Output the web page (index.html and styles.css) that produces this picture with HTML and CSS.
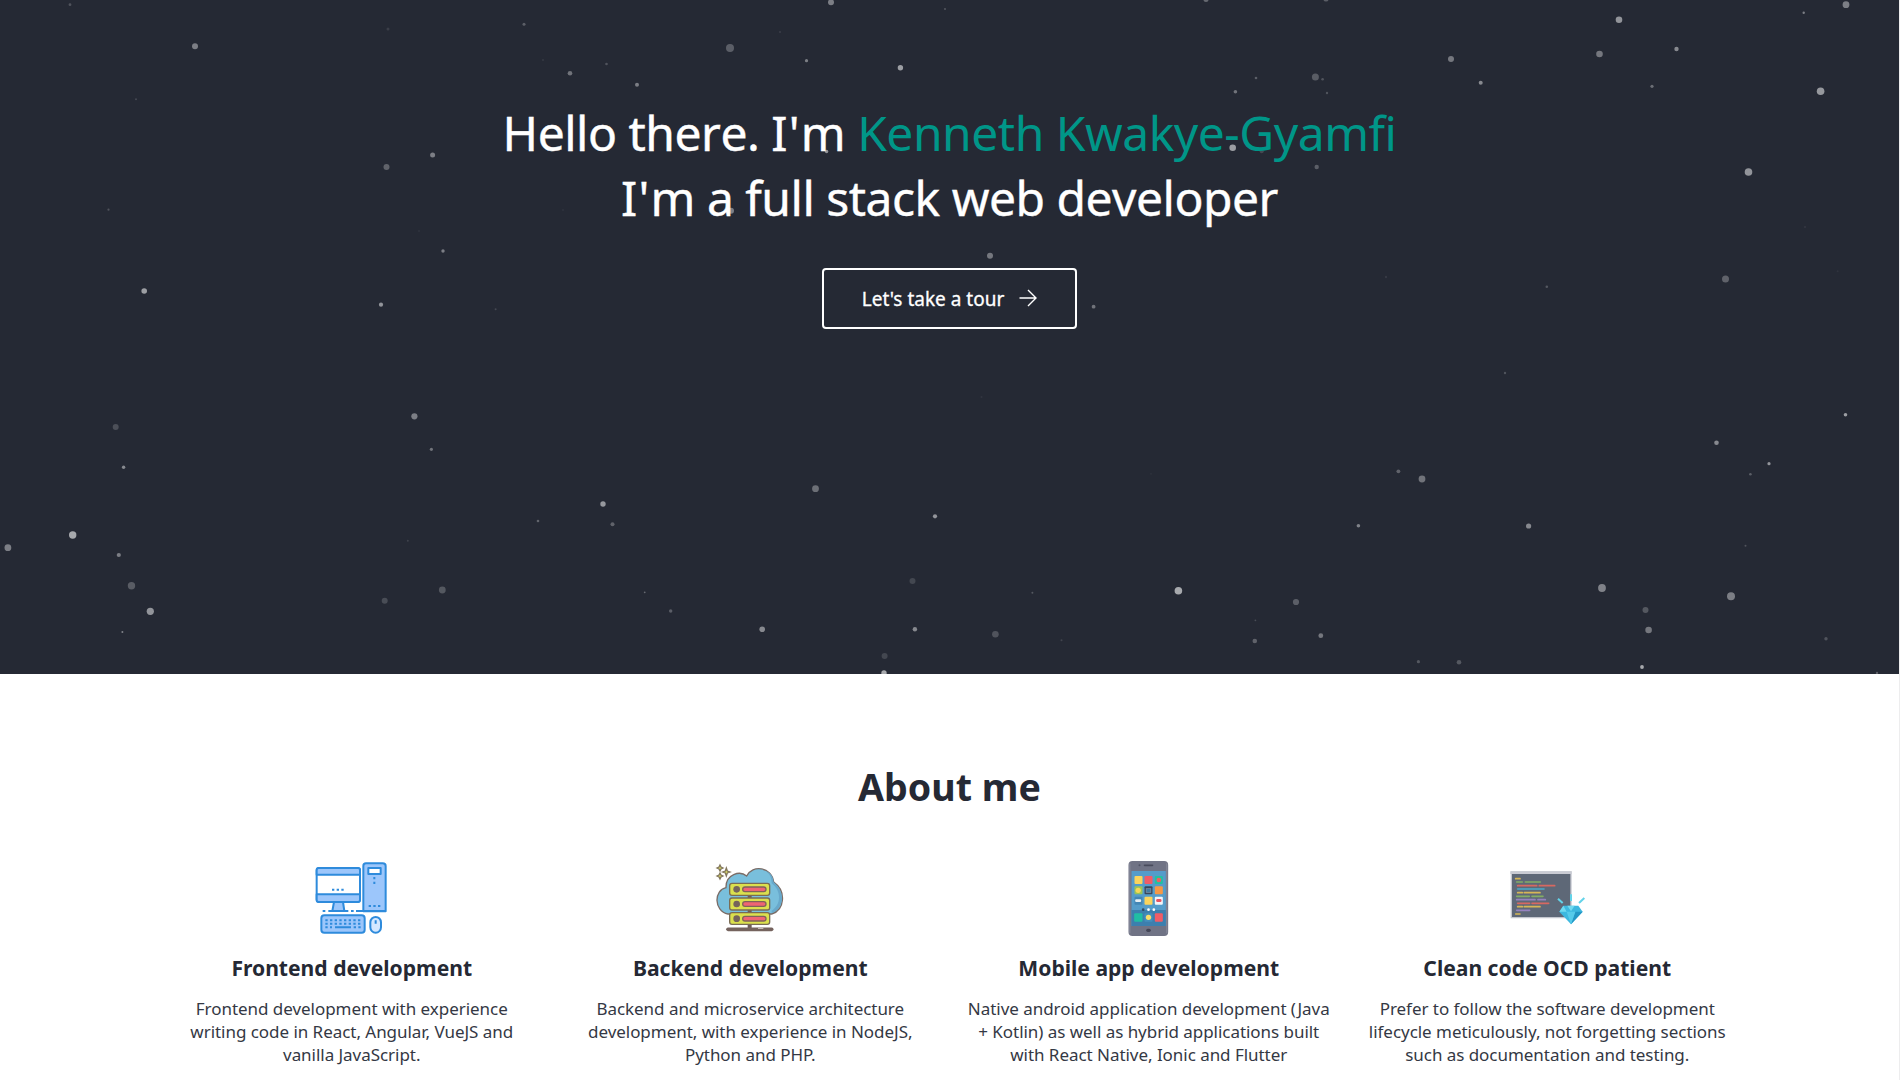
FILE: index.html
```html
<!DOCTYPE html>
<html lang="en">
<head>
<meta charset="utf-8">
<title>Kenneth Kwakye-Gyamfi</title>
<link rel="stylesheet" href="styles.css">
</head>
<body>
<header class="hero">
  <svg class="stars" id="stars" aria-hidden="true"></svg>
  <h1 class="headline">Hello there. I<span class="mark">'</span>m <span class="name">Kenneth Kwakye-Gyamfi</span><br>I<span class="mark">'</span>m a full stack web developer</h1>
  <a class="tour" href="#about">Let's take a tour
    <svg class="arrow" viewBox="0 0 18 18"><path d="M.5 9H17M9 1l8 8-8 8"/></svg>
  </a>
</header>
<main class="about" id="about">
  <h2 class="about-title">About me</h2>
  <div class="skills">
    <article class="skill">
      <svg class="icon" viewBox="36 24 240 240">
        <g fill="#fff" stroke="#2e8bdc" stroke-width="6" stroke-linejoin="round">
          <rect x="50" y="54" width="130" height="102" rx="8"/>
          <path fill="#9cc6fb" d="M50 74V60q0-6 6-6h118q6 0 6 6v14zM50 133h130v17q0 6-6 6H56q-6 0-6-6zM102 156h27l4 27H97z"/>
          <path fill="#9cc6fb" d="M190 184V48q0-8 8-8h50q9 0 9 8v136z"/>
          <rect x="205" y="54" width="37" height="18"/>
          <rect fill="#9cc6fb" x="64" y="196" width="130" height="52" rx="9"/>
          <rect fill="#d5e8ff" x="211" y="201" width="32" height="47" rx="16"/>
        </g>
        <g fill="none" stroke="#2e8bdc" stroke-width="6">
          <path d="M85 183h60M168 183h90M105 232h48M227 211v10"/>
          <path stroke-dasharray="7 7" d="M96 119h38M206 168h37M223 81v24M76 211h108M76 221h108M76 232h20M161 232h24"/>
          <path d="M68 183h8M153 183h8"/>
        </g>
      </svg>
      <h3 class="skill-title">Frontend development</h3>
      <p class="skill-text">Frontend development with experience<br>writing code in React, Angular, VueJS and<br>vanilla JavaScript.</p>
    </article>
    <article class="skill">
      <svg class="icon" viewBox="30 24 240 240">
        <path d="M84 192C40 182 42 120 78 113C77 72 120 61 140 78C157 43 215 50 221 96C260 123 254 180 215 192z" fill="#79bfdc" stroke="#7a6d68" stroke-width="4"/>
        <path d="M195 62c15 8 20 22 20 38 30 22 29 65 0 82v8c40-16 41-65 6-94-2-20-11-30-26-34z" fill="#68a9cb"/>
        <path d="M149 136v102" stroke="#6f5d58" stroke-width="12"/>
        <g fill="#dbe04d" stroke="#796c55" stroke-width="4">
          <rect x="89" y="100" width="120" height="36" rx="7"/>
          <rect x="89" y="144" width="120" height="36" rx="7"/>
          <rect x="89" y="188" width="120" height="35" rx="7"/>
        </g>
        <g fill="#ef6473" stroke="#806259" stroke-width="4">
          <rect x="128" y="111" width="70" height="14" rx="7"/>
          <rect x="128" y="155" width="70" height="14" rx="7"/>
          <rect x="128" y="199" width="70" height="14" rx="7"/>
        </g>
        <g fill="#76645b"><circle cx="110" cy="118" r="10"/><circle cx="110" cy="162" r="10"/><circle cx="110" cy="206" r="10"/></g>
        <path d="M84 238h131" stroke="#75635e" stroke-width="11" stroke-linecap="round"/>
        <path d="M174 235h16" stroke="#c5bbb5" stroke-width="4"/>
        <g fill="#dadc63" stroke="#82765e" stroke-width="4">
          <path d="m60 45 3 6 6 3-6 3-3 6-3-6-6-3 6-3zM79 54l3 9 8 3-8 3-3 9-3-9-8-3 8-3zM60 69l3 6 6 3-6 3-3 6-3-6-6-3 6-3z"/>
        </g>
      </svg>
      <h3 class="skill-title">Backend development</h3>
      <p class="skill-text">Backend and microservice architecture<br>development, with experience in NodeJS,<br>Python and PHP.</p>
    </article>
    <article class="skill">
      <svg class="icon" viewBox="25.5 24 240 240">
        <rect x="84" y="33" width="119" height="225" rx="12" fill="#707385"/>
        <path d="M88 40v210M199 40v210" stroke="#888b9b" stroke-width="3"/>
        <path fill="#549cca" d="M93 63h103v165H93z"/><path fill="#3c7fae" d="M93 180h103v48H93z"/>
        <path d="M132 46h24" stroke="#484b5c" stroke-width="5" stroke-linecap="round"/><circle cx="117" cy="46" r="3" fill="#505365"/>
        <rect x="137" y="236" width="14" height="10" rx="5" fill="#444657"/>
        <g>
          <rect x="102" y="78" width="24" height="24" rx="3" fill="#fbd45d"/>
          <rect x="132" y="78" width="24" height="24" rx="3" fill="#f15c66"/>
          <rect x="163" y="78" width="24" height="24" rx="3" fill="#22c1a0"/>
          <rect x="102" y="109" width="24" height="24" rx="3" fill="#9ac457"/>
          <rect x="132" y="109" width="24" height="24" rx="3" fill="#38465b"/>
          <rect x="163" y="109" width="24" height="24" rx="3" fill="#f79845"/>
          <rect x="102" y="140" width="24" height="24" rx="3" fill="#4386b5"/>
          <rect x="132" y="140" width="24" height="24" rx="3" fill="#fbd45d"/>
          <rect x="163" y="140" width="24" height="24" rx="3" fill="#f4f5f8"/>
          <rect x="101" y="190" width="25" height="25" rx="3" fill="#20bea3"/>
          <rect x="132" y="190" width="24" height="25" rx="3" fill="#438fbd"/>
          <rect x="163" y="190" width="24" height="25" rx="3" fill="#f15c66"/>
        </g>
        <circle cx="175" cy="90" r="7" fill="#ec6065"/><circle cx="113" cy="121" r="8" fill="#f6d858"/>
        <rect x="137" y="116" width="14" height="11" fill="#417ba2" stroke="#8296aa" stroke-width="2"/>
        <rect x="104" y="148" width="18" height="8" rx="3" fill="#e6eff4"/><rect x="167" y="147" width="16" height="9" rx="4" fill="#ea5461"/>
        <circle cx="144" cy="202" r="8" fill="#fadd69"/>
        <g fill="#fff"><circle cx="128" cy="179" r="4" fill="#314b65"/><circle cx="144" cy="179" r="4"/><circle cx="160" cy="179" r="4"/></g>
      </svg>
      <h3 class="skill-title">Mobile app development</h3>
      <p class="skill-text">Native android application development (Java<br>+ Kotlin) as well as hybrid applications built<br>with React Native, Ionic and Flutter</p>
    </article>
    <article class="skill">
      <svg class="icon" viewBox="21 24 240 240">
        <path d="M34 66h179v137H34z" fill="#5e6877" stroke="#c4c7cf" stroke-width="4"/>
        <path d="M31 68h184" stroke="#c9cbd3" stroke-width="8"/>
        <g fill="none" stroke-width="5" stroke-linecap="round">
          <path stroke="#d6b656" d="M47 86h13M53 128h14M73 128h47M53 170h14M73 170h47M47 192h13"/>
          <path stroke="#83ad65" d="M50 96h17M76 96h45M50 139h38M96 139h33"/>
          <path stroke="#d76861" d="M53 107h57M118 107h46M53 160h36M96 160h50"/>
          <path stroke="#4ba9c9" d="M53 117h79"/>
          <path stroke="#9682bf" d="M50 149h55M114 149h22M50 181h39"/>
        </g>
        <path d="m174 146 14 13M213 133v20M237 159l16-15" stroke="#63d3e9" stroke-width="6"/>
        <path fill="#3db8df" d="m190 167h45l13 18-35 38-35-38z"/>
        <path fill="#70daf0" d="m190 167-12 18h22zM202 167h22l-11 17z"/>
        <path fill="#2497c5" d="m226 185h22l-35 38z"/><path fill="#56cbea" d="M200 185h26l-13 38z"/>
      </svg>
      <h3 class="skill-title">Clean code OCD patient</h3>
      <p class="skill-text">Prefer to follow the software development<br>lifecycle meticulously, not forgetting sections<br>such as documentation and testing.</p>
    </article>
  </div>
</main>
<script src="stars.js"></script>
</body>
</html>
```

FILE: styles.css
```css
* { box-sizing: border-box; }
html { background: #ededee; overflow: hidden; }
body {
  width: 1899px;
  height: 1080px;
  margin: 0;
  overflow: hidden;
  background: #fff;
  color: #252934;
  font-family: "Noto Sans", sans-serif;
}
h1, h2, h3, p { margin: 0; }
.hero {
  position: relative;
  display: flex;
  flex-direction: column;
  align-items: center;
  height: 674px;
  padding-top: 100px;
  background: #252934;
  color: #fff;
}
.stars {
  position: absolute;
  inset: 0;
  width: 100%;
  height: 100%;
  fill: #fff;
}
.headline {
  position: relative;
  font-size: 48px;
  font-weight: 400;
  line-height: 65px;
  letter-spacing: -.5px;
  text-align: center;
  font-kerning: none;
  -webkit-text-stroke: .4px #fff;
}
.mark { margin: 0 1.7px; }
.name { color: #009688; font-kerning: normal; -webkit-text-stroke: 0; }
.tour {
  position: relative;
  display: flex;
  align-items: center;
  justify-content: center;
  gap: 15px;
  width: 255px;
  height: 61px;
  margin-top: 38px;
  padding-top: 1px;
  border: 2px solid #fff;
  border-radius: 4px;
  color: #fff;
  font-size: 19px;
  font-weight: 400;
  text-decoration: none;
  -webkit-text-stroke: .3px #fff;
}
.arrow {
  width: 18px;
  height: 18px;
  margin-top: -3px;
  fill: none;
  stroke: #fff;
  stroke-width: 1.4;
}
.about { padding-top: 87px; text-align: center; }
.about-title {
  font-size: 37.6px;
  font-weight: 700;
  line-height: 52px;
}
.skills {
  display: grid;
  grid-template-columns: repeat(4, 1fr);
  width: 1594px;
  margin: 45px auto 0;
}
.skill { display: flex; flex-direction: column; align-items: center; }
.icon { width: 80px; height: 80px; }
.skill-title {
  margin-top: 16px;
  font-size: 21.1px;
  font-weight: 700;
  line-height: 28px;
}
.skill-text {
  margin-top: 15px;
  color: #343844;
  font-size: 17px;
  line-height: 23px;
  letter-spacing: -.04px;
  white-space: nowrap;
}
```

FILE: stars.js
```js
// Each star: x, y, radius, opacity
const stars = [
  [70,4.7,1.4,.2],[195,46.3,3,.4],[388,29,1.5,.1],[524,24.3,1.5,.25],[831,2.3,3,.4],[945,9,1.1,.2],
  [780,32,1,.1],[730,48,4,.25],[806.5,60.7,1.6,.4],[900.4,67.7,2.7,.55],[543,60,1,.08],[606.5,64,1.3,.2],
  [570,73.3,2.3,.35],[637,84.7,2,.4],[136,99.3,1,.15],[432.6,155,2.5,.4],[386.5,167,3,.27],[108.5,209.7,1.1,.2],
  [563,210,1,.05],[419,231,1,.05],[443,251,1.7,.4],[144.2,291,2.8,.55],[381,304.7,2.1,.5],[495.6,309.3,1,.15],
  [826.6,151.5,1.7,.5],[731,210.7,3,.4],[1232.7,147.7,3.3,.55],[1261.7,151.3,2,.15],[1316.7,167,2.2,.25],
  [1206,-.5,2.6,.3],[1326,-1,2.6,.25],[1619,19.7,3.3,.5],[1803.7,12.7,1.2,.4],[1846,4.7,3.4,.4],[1599.5,54,3.3,.37],
  [1676.5,49,2.2,.45],[1451,59,3,.37],[1480.7,82.7,2,.45],[1652,86.3,1.6,.32],[1820.6,91.3,3.8,.52],
  [1256,78,1.3,.25],[1315.4,77,3.5,.24],[1322.6,79.3,1.3,.2],[1235.4,91.7,1.8,.35],[1327,93,1.2,.2],
  [1748.5,172,3.8,.5],[1805,227,1,.07],[990,255.7,3,.37],[1386,277,1.2,.08],[1546.8,286.7,1.3,.22],
  [1725.5,279,3.5,.27],[1837.6,271.3,1,.05],[1093.6,306.7,1.9,.35],
  [414.4,416.3,3.1,.4],[115.7,427,3,.18],[431.4,449.3,1.6,.35],[123.6,467.3,1.7,.45],[815.5,488.7,3.4,.33],
  [603,504,2.7,.52],[538,521,1.3,.28],[612.5,524.3,2,.27],[935,516.3,2.1,.5],[407.8,540.7,1,.12],
  [72.7,535,3.7,.6],[7.9,547.7,3.4,.4],[118.8,555,2.1,.4],[131.5,585.7,3.7,.24],[442.3,590,3.4,.22],
  [384.7,600.7,3,.17],[150.3,611.3,3.6,.5],[644.7,592.3,.9,.3],[670.7,611,1.7,.25],[762.2,629.3,2.8,.45],
  [912.5,581,3,.14],[914.9,629.3,2.2,.45],[122.4,632,1,.42],[884.6,656,3,.14],[884,673,2.7,.6],
  [1505,373,1.2,.2],[981.5,397,1,.06],[1845.5,414.7,1.8,.55],[1716.5,442.7,2.3,.45],[1769,463.7,1.6,.5],
  [1750.4,474.3,1.3,.25],[1398.4,471.3,1.9,.27],[1422,479,3.4,.35],[1358.4,525.7,1.8,.42],[1528.6,526,2.6,.45],
  [1745.5,545.7,1,.2],[1151,473.7,1,.04],[1032.4,592.7,1,.22],[1178.4,590.7,3.8,.6],[1296,602,3.1,.25],
  [1255.4,620.3,.9,.17],[1254.8,641,2.3,.27],[1320.8,635.7,2.4,.37],[1061.5,640.3,1,.13],[995.4,634.3,3.3,.2],
  [1418.4,661.7,1.6,.22],[1459,662.3,2.3,.22],[1602,588,3.9,.42],[1731,596.3,4,.4],[1645.5,610,3,.22],
  [1648.6,630,3.3,.37],[1642,667,1.9,.6],[1826,638.7,1.7,.2],[1877,673,1.2,.25]
];
const sky = document.getElementById('stars');
for (const [x, y, r, o] of stars) {
  const dot = document.createElementNS('http://www.w3.org/2000/svg', 'circle');
  dot.setAttribute('cx', x);
  dot.setAttribute('cy', y);
  dot.setAttribute('r', r);
  dot.setAttribute('opacity', o);
  sky.append(dot);
}
```
